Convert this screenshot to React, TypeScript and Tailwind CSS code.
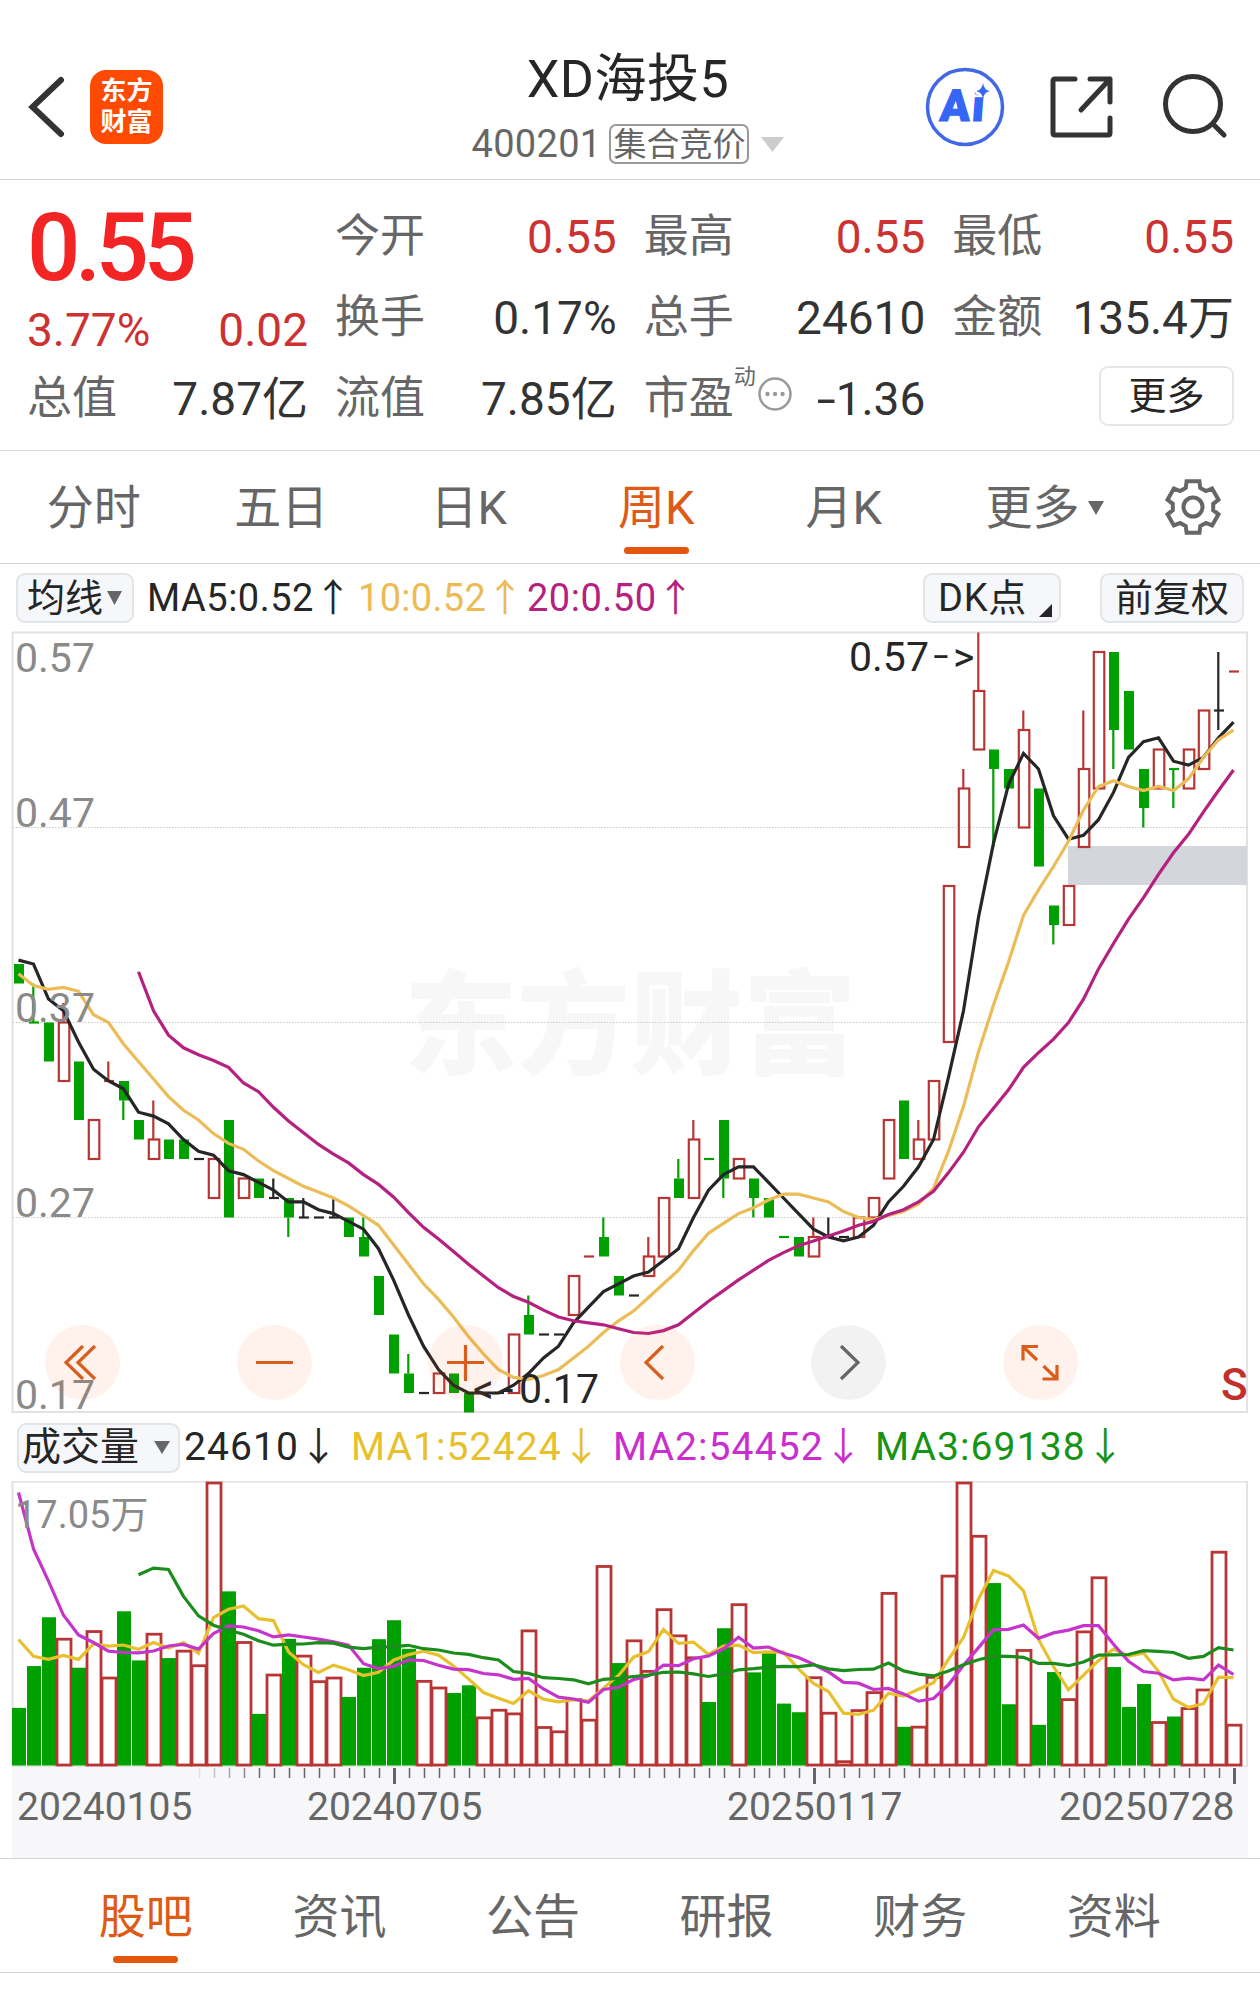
import clsx from "clsx";

// [open, close, high, low] in cents
const candles = [
  [40, 39, 40, 39], [37, 37, 39, 37], [37, 35, 37, 35], [34, 37, 38, 34], [35, 32, 35, 32],
  [30, 32, 32, 30], [34, 34, 35, 34], [34, 33, 34, 32], [32, 31, 32, 31], [30, 31, 33, 30],
  [31, 30, 31, 30], [31, 30, 31, 30], [30, 30, 30, 30], [28, 30, 30, 28], [32, 27, 32, 27],
  [28, 29, 29, 28], [29, 28, 29, 28], [28, 28, 29, 28], [28, 27, 28, 26], [27, 27, 28, 27],
  [27, 27, 27, 27], [27, 27, 28, 27], [27, 26, 27, 26], [26, 25, 27, 25], [24, 22, 24, 22],
  [21, 19, 21, 19], [19, 18, 20, 18], [18, 18, 18, 18], [18, 19, 19, 18], [19, 18, 19, 18],
  [18, 17, 18, 17], [18, 18, 18, 18], [18, 18, 18, 18], [18, 21, 21, 18], [22, 21, 23, 21],
  [21, 21, 21, 21], [21, 21, 21, 21], [22, 24, 24, 22], [25, 25, 25, 25], [26, 25, 27, 25],
  [24, 23, 24, 23], [23, 23, 23, 23], [24, 25, 26, 24], [25, 28, 28, 25], [29, 28, 30, 28],
  [28, 31, 32, 28], [30, 30, 30, 30], [32, 29, 32, 28], [29, 30, 30, 29], [29, 28, 29, 27],
  [28, 27, 28, 27], [26, 26, 26, 26], [26, 25, 26, 25], [25, 26, 27, 25], [26, 26, 27, 26],
  [26, 26, 26, 26], [26, 27, 27, 26], [27, 28, 28, 27], [29, 32, 32, 29], [33, 30, 33, 30],
  [30, 31, 32, 30], [31, 34, 34, 31], [36, 44, 44, 36], [46, 49, 50, 46], [51, 54, 57, 51],
  [51, 50, 51, 46], [50, 49, 50, 49], [47, 52, 53, 47], [49, 45, 49, 45], [43, 42, 43, 41],
  [42, 44, 44, 42], [46, 50, 53, 46], [49, 56, 56, 49], [56, 52, 56, 50], [54, 51, 54, 51],
  [50, 48, 50, 47], [49, 51, 51, 49], [50, 50, 50, 48], [49, 51, 51, 49], [50, 53, 53, 50],
  [53, 53, 56, 52], [55, 55, 55, 55],
];

// thousands of hands
const volumes = [
  34.4, 59.6, 89, 76.4, 58.6, 81, 53, 92.6, 63, 79.4, 64.4, 69.2, 60.4, 170.5, 104.6, 74.4, 30.8,
  54.8, 76, 66.2, 50.8, 53, 41, 58.6, 75.8, 87.2, 70, 51, 47, 43.4, 48, 29, 33.6, 31.4, 81.4, 23.2,
  20.6, 40, 27.6, 120.2, 61.4, 75.4, 57, 94.2, 78.4, 65.2, 38, 82.4, 97.2, 55.8, 67.6, 37, 31.8,
  53.2, 31.8, 2.6, 33.4, 44.2, 104, 23, 23.4, 53.4, 114.4, 170.5, 138.4, 109.6, 36.6, 69.6, 24.2,
  56, 40, 80.8, 113.4, 59, 35, 48.8, 26.2, 29.2, 34.6, 45.8, 128.8, 24.6,
];

const RED = "#b73635";
const GREEN = "#00a000";
const BLACK = "#262626";

const closes = candles.map((c) => c[1]);
const priceY = (p: number) => (57 - p) * 19.5 + 0.5;
const volumeY = (v: number) => 284 - (v / 170.5) * 283;

// lead holds the averages that need bars from before the visible window
const average = (values: number[], n: number, lead: number[]) => {
  const start = n - 1 - lead.length;
  const rest = values
    .slice(n - 1)
    .map((_, i) => values.slice(i, i + n).reduce((a, b) => a + b, 0) / n);
  return { start, values: [...lead, ...rest] };
};

const toPoints = (ma: { start: number; values: number[] }, y: (v: number) => number) =>
  ma.values.map((v, i) => `${18.5 + 15 * (i + ma.start)},${y(v).toFixed(1)}`).join(" ");

const priceLines = [
  { color: "#262626", ma: average(closes, 5, [40.2, 40, 38.2, 37.6]) },
  { color: "#ebbc57", ma: average(closes, 10, [39.5, 38.9, 38.7, 38.8, 38.6, 37.4, 37, 35.9, 35]) },
  {
    color: "#b5217f",
    ma: average(closes, 20, [39.6, 37.6, 36.35, 35.7, 35.35, 35.05, 34.7, 33.9, 33.45, 32.65, 31.95]),
  },
];

const volumeLines = [
  { color: "#e8c02e", ma: average(volumes, 5, [75.6, 65.4, 63.6, 66]) },
  {
    color: "#c535cb",
    ma: average(volumes, 10, [164.2, 130.2, 110.8, 90.2, 78.4, 73.8, 68.6, 67.8, 67.6]),
  },
  {
    color: "#1c8c1c",
    ma: average(volumes, 20, [114.6, 118.6, 117.8, 101.6, 89.8, 84.2, 81.2, 78.8, 74.8, 72.2, 72.8]),
  },
];

const quotes = [
  { label: "今开", value: "0.55", red: true },
  { label: "最高", value: "0.55", red: true },
  { label: "最低", value: "0.55", red: true },
  { label: "换手", value: "0.17%" },
  { label: "总手", value: "24610" },
  { label: "金额", value: "135.4万" },
];

const periods = ["分时", "五日", "日K", "周K", "月K"];
const sections = ["股吧", "资讯", "公告", "研报", "财务", "资料"];

const gearPoints = Array.from({ length: 6 }, (_, k) =>
  [
    [-21, 20.5],
    [-14, 26.5],
    [14, 26.5],
    [21, 20.5],
  ].map(([d, r]) => {
    const a = ((k * 60 - 90 + d) * Math.PI) / 180;
    return `${(30 + r * Math.cos(a)).toFixed(1)},${(30 + r * Math.sin(a)).toFixed(1)}`;
  })
)
  .flat()
  .join(" ");

const Header = () => (
  <header className="flex h-[180px] items-start border-b border-[#d4d4d4]">
    <svg className="ml-6 mt-[72px] h-[70px] w-[44px]" fill="none" stroke="#333" strokeWidth="6">
      <path d="M37 8 8.500 35 37 62" strokeLinecap="round" />
    </svg>
    <div className="ml-[22px] mt-[70px] flex h-[74px] w-[73px] flex-col items-center justify-center rounded-[16px] bg-[#fe4a02] text-[26px] leading-[31px] font-bold text-white">
      <span>东方</span>
      <span>财富</span>
    </div>
    <div className="ml-[299px] mt-[50px] flex w-[332px] flex-col items-center whitespace-nowrap">
      <h1 className="text-[52px] leading-[60px] tracking-[0.5px] text-[#262626]">XD海投5</h1>
      <div className="mt-[12px] flex items-center text-[38px] leading-[44px] text-[#666]">
        <span className="tracking-[0.3px]">400201</span>
        <span className="ml-2 flex h-[40px] items-center rounded-[7px] border-2 border-[#999] px-[2px] text-[33px] leading-none">
          集合竞价
        </span>
        <svg className="ml-3 h-[15px] w-[23px]" fill="#ccc">
          <path d="M0 0h23L11.500 15z" />
        </svg>
      </div>
    </div>
    <svg className="ml-[131px] mt-[67px] h-[80px] w-[80px]">
      <circle cx="40" cy="40" r="37.500" fill="none" stroke="#4169e6" strokeWidth="3.500" />
      <text x="14" y="54" fontSize="44" fontWeight="900" fill="#3566f5" stroke="#3566f5" strokeWidth="1.200" transform="skewX(-4) translate(4 0)">
        A<tspan dx="2">i</tspan>
      </text>
      <circle cx="57" cy="22" r="7.800" fill="#fff" />
      <path d="M58 16q1 7 7 8q-6 1-7 8q-1-7-7-8q6-1 7-8z" fill="#3566f5" />
    </svg>
    <svg className="ml-[44px] mt-[72px] h-[70px] w-[70px]" fill="none" stroke="#333" strokeWidth="5" strokeLinecap="round" strokeLinejoin="round">
      <path d="M26 7H6q-2 0-2 2v52q0 2 2 2h53q2 0 2-2V46M41 7h20v23M61 7 32 38" />
    </svg>
    <svg className="ml-[42px] mt-[70px] h-[72px] w-[70px]" fill="none" stroke="#333" strokeWidth="5" strokeLinecap="round">
      <circle cx="32" cy="34" r="27.500" />
      <path d="m52 54 11 11" />
    </svg>
  </header>
);

const QuoteItem = ({ label, value, red }: { label: string; value: string; red?: boolean }) => (
  <div className="flex h-[81px] items-center justify-between">
    <span className="text-[45px] text-[#666]">{label}</span>
    <span className={clsx("text-[46px]", red ? "text-[#cc3232]" : "text-[#333]")}>{value}</span>
  </div>
);

const Quotes = () => (
  <section className="flex h-[271px] gap-[27px] border-b border-[#d4d4d4] pl-[27px] pr-[26px] pt-[16px] leading-none">
    <div className="w-[281px]">
      <div className="h-[101px] pt-[5px] text-[94px] font-medium tracking-[-5.5px] text-[#f22424]">0.55</div>
      <div className="mt-[4px] flex h-[57px] items-center justify-between text-[46px] text-[#cc3232]">
        <span>3.77%</span>
        <span>0.02</span>
      </div>
      <QuoteItem label="总值" value="7.87亿" />
    </div>
    <div className="grid flex-1 grid-cols-3 content-start gap-x-[27px]">
      {quotes.map((q) => (
        <QuoteItem key={q.label} {...q} />
      ))}
      <QuoteItem label="流值" value="7.85亿" />
      <div className="flex h-[81px] items-center text-[46px]">
        <span className="text-[45px] text-[#666]">市盈</span>
        <span className="mb-11 text-[22px] text-[#666]">动</span>
        <svg className="mb-[10px] ml-[2px] h-[34px] w-[34px]" fill="#999">
          <circle cx="17" cy="17" r="15.500" fill="none" stroke="#999" strokeWidth="2.500" />
          <circle cx="9.500" cy="17" r="2.200" />
          <circle cx="17" cy="17" r="2.200" />
          <circle cx="24.500" cy="17" r="2.200" />
        </svg>
        <span className="ml-auto text-[#333]">
          <span className="mr-[3px] inline-block scale-x-150">-</span>1.36
        </span>
      </div>
      <div className="flex h-[81px] items-center justify-end">
        <button className="mb-[5px] h-[60px] w-[135px] rounded-[9px] border-2 border-[#e6e6e6] text-[38px] text-[#262626]">
          更多
        </button>
      </div>
    </div>
  </section>
);

const PeriodTabs = () => (
  <nav className="flex h-[113px] border-b border-[#d4d4d4] text-[47px] leading-none text-[#666]">
    {periods.map((p) => (
      <div
        key={p}
        className={clsx("flex w-[187.5px] flex-col items-center pt-[33px]", p === "周K" && "text-[#dd5b17]")}
      >
        {p}
        {p === "周K" && <span className="mt-[16px] h-[7px] w-[65px] rounded-full bg-[#e4560c]" />}
      </div>
    ))}
    <div className="ml-[48px] flex pt-[33px]">
      更多
      <svg className="ml-[8px] mt-[17px] h-[14px] w-[16px]" fill="#666">
        <path d="M0 0h16L8 14z" />
      </svg>
    </div>
    <svg className="ml-[59px] mt-[26px] h-[60px] w-[60px]" fill="none" stroke="#666" strokeWidth="4">
      <polygon points={gearPoints} />
      <circle cx="30" cy="30" r="9.500" />
    </svg>
  </nav>
);

const chip = "flex h-[50px] items-center rounded-[9px] border-2 border-[#e2e4e8] bg-[#f6f7fa] text-[#262626]";

const IndicatorBar = () => (
  <div className="flex h-[68px] items-center pl-[16px] pr-[16px] text-[38px] leading-none">
    <div className={clsx(chip, "w-[118px] pl-[9px]")}>
      均线
      <svg className="ml-[4px] h-[14px] w-[15px]" fill="#666">
        <path d="M0 0h15L7.500 14z" />
      </svg>
    </div>
    <span className="ml-[13px] w-[211px] whitespace-nowrap tracking-[0.5px] text-[#262626]">MA5:0.52↑</span>
    <span className="w-[169px] whitespace-nowrap tracking-[0.3px] text-[#ecbb55]">10:0.52↑</span>
    <span className="whitespace-nowrap tracking-[0.5px] text-[#b5217f]">20:0.50↑</span>
    <div className={clsx(chip, "ml-auto w-[138px] pl-[13px]")}>
      <span className="tracking-[0.7px]">DK点</span>
      <svg className="ml-[12px] mt-[24px] h-[13px] w-[13px] shrink-0" fill="#262626">
        <path d="M13 0v13H0z" />
      </svg>
    </div>
    <div className={clsx(chip, "ml-[39px] w-[144px] justify-center")}>前复权</div>
  </div>
);

const Candle = ({ i }: { i: number }) => {
  const [open, close, high, low] = candles[i];
  const prev = i ? closes[i - 1] : open;
  const diff = close - open || close - prev;
  const color = diff > 0 ? RED : diff < 0 ? GREEN : BLACK;
  const x = 14 + 15 * i;
  const top = Math.max(open, close);
  const bottom = Math.min(open, close);
  return (
    <g stroke={color} strokeWidth="2.200">
      {high > top && <path d={`M${x + 4.3} ${priceY(high)}V${priceY(top)}`} />}
      {low < bottom && <path d={`M${x + 4.3} ${priceY(bottom)}V${priceY(low)}`} />}
      {open === close && <path d={`M${x} ${priceY(close)}h10`} />}
      {close > open && (
        <rect x={x - 0.2} y={priceY(top)} width="10.500" height={priceY(bottom) - priceY(top)} fill="none" />
      )}
      {close < open && (
        <rect x={x} y={priceY(top)} width="10" height={priceY(bottom) - priceY(top)} fill={color} stroke="none" />
      )}
    </g>
  );
};

const PriceChart = () => (
  <div className="relative h-[782px]">
    <svg className="block h-[782px] w-[1260px] overflow-visible">
      <text x="404" y="433" fontSize="113" fontWeight="900" fill="#f7f7f7">
        东方财富
      </text>
      <rect x="12.500" y="0.500" width="1234.500" height="779.500" fill="none" stroke="#e2e2e2" strokeWidth="2" />
      <path d="M13 195.500H1247M13 390.500H1247M13 585.500H1247" stroke="#ccc" strokeDasharray="1.500 1.500" />
      <rect x="1068" y="214" width="179" height="39" fill="#d3d6db" />
      {candles.map((_, i) => (
        <Candle key={i} i={i} />
      ))}
      {priceLines.map((l) => (
        <polyline key={l.color} points={toPoints(l.ma, priceY)} fill="none" stroke={l.color} strokeWidth="3.200" />
      ))}
      <g fontSize="41" fill="#8a8a8a">
        <text x="15" y="40">0.57</text>
        <text x="15" y="195">0.47</text>
        <text x="15" y="390">0.37</text>
        <text x="15" y="585">0.27</text>
        <text x="15" y="777">0.17</text>
      </g>
      <g fontSize="41" fill="#262626">
        <text y="39">
          <tspan x="849">0.57</tspan>
          <tspan x="933" y="42" fontSize="56" fontWeight="300">-</tspan>
          <tspan x="953" y="39">&gt;</tspan>
        </text>
        <text y="771">
          <tspan x="473">&lt;</tspan>
          <tspan x="502">-</tspan>
          <tspan x="519">0.17</tspan>
        </text>
      </g>
      <text x="1221" y="768" fontSize="44" fontWeight="500" fill="#c0302c">
        S
      </text>
    </svg>
    {/* Pan and zoom controls */}
    <div className="absolute left-[45px] top-[693px] flex gap-[116.6px]">
      {[
        "M38 21 21 37.500l17 16.500M50 21 33 37.500l17 16.500",
        "M19 37.500h37",
        "M19 37.500h37M37.500 20v36",
        "M43 21 26 37.500l17 16.500",
        "M30 21l17 16.500L30 54",
        "M20 35.500V21.500h15M20.500 22 34 35M54 40v14H39.500M54 54 40.500 41",
      ].map((d, i) => (
        <svg
          key={d}
          className={clsx("h-[75px] w-[75px] rounded-full", i === 4 ? "bg-black/5" : "bg-[#ff5a14]/8")}
          fill="none"
          stroke={i === 4 ? "#666" : "#d95d1c"}
          strokeWidth="3.200"
        >
          <path d={d} />
        </svg>
      ))}
    </div>
  </div>
);

const VolumeBar = () => (
  <div className="flex h-[67px] items-center pl-[17px] text-[39px] leading-none tracking-[1.1px]">
    <div className={clsx(chip, "w-[163px] pl-[3px] tracking-normal")}>
      成交量
      <svg className="ml-[15px] h-[13px] w-[16px]" fill="#666">
        <path d="M0 0h16L8 13z" />
      </svg>
    </div>
    <span className="ml-[4px] w-[167px] whitespace-nowrap text-[#262626]">24610↓</span>
    <span className="w-[262px] whitespace-nowrap text-[#e8c02e]">MA1:52424↓</span>
    <span className="w-[262px] whitespace-nowrap text-[#c92fce]">MA2:54452↓</span>
    <span className="whitespace-nowrap text-[#179417]">MA3:69138↓</span>
  </div>
);

const VolumeChart = () => (
  <svg className="block h-[286px] w-[1260px]">
    <rect x="12.500" y="0.500" width="1234.500" height="285" fill="none" stroke="#e2e2e2" strokeWidth="2" />
    {volumes.map((v, i) => {
      const up = i > 0 && closes[i] >= closes[i - 1];
      const x = 12 + 15 * i;
      const y = volumeY(v);
      return up ? (
        <rect key={i} x={x} y={y + 1} width="14" height={283 - y} fill="#fff" stroke={RED} strokeWidth="2.800" />
      ) : (
        <rect key={i} x={x} y={y} width="14" height={284.5 - y} fill={GREEN} />
      );
    })}
    {volumeLines.map((l) => (
      <polyline key={l.color} points={toPoints(l.ma, volumeY)} fill="none" stroke={l.color} strokeWidth="3.200" />
    ))}
    <text x="15" y="47" fontSize="38" fill="#8a8a8a">
      17.05万
    </text>
  </svg>
);

const TimeAxis = () => (
  <div className="h-[92px] border-b border-[#d0d3d4] px-[12px]">
    <div className="h-full bg-[#f7f7fa]">
      <svg className="block h-[90px] w-[1236px]">
        {candles.slice(12).map((_, k) => {
          const major = [25, 53, 81].includes(k + 12);
          return (
            <path
              key={k}
              d={`M${187.5 + 15 * k} 1v${major ? 16 : 10}`}
              stroke="#666"
              strokeWidth={major ? 3 : 1.5}
              opacity={Math.min(1, 0.15 + k * 0.2)}
            />
          );
        })}
        <g fontSize="39" fill="#666">
          <text x="5" y="53">20240105</text>
          <text x="295" y="53">20240705</text>
          <text x="715" y="53">20250117</text>
          <text x="1047" y="53">20250728</text>
        </g>
      </svg>
    </div>
  </div>
);

const SectionTabs = () => (
  <nav className="flex h-[114px] border-b border-[#d0d3d4] pl-[49px] text-[47px] leading-none text-[#666]">
    {sections.map((s, i) => (
      <div key={s} className={clsx("flex w-[193.6px] flex-col items-center pt-[34px]", i === 0 && "text-[#dd5b17]")}>
        {s}
        {i === 0 && <span className="mt-[16px] h-[7px] w-[65px] rounded-full bg-[#e4560c]" />}
      </div>
    ))}
  </nav>
);

export default function App() {
  return (
    <main className="h-[1989px] w-[1260px] overflow-hidden bg-white font-[Roboto,'Noto_Sans_CJK_SC',sans-serif]">
      <Header />
      <Quotes />
      <PeriodTabs />
      <IndicatorBar />
      <PriceChart />
      <VolumeBar />
      <VolumeChart />
      <TimeAxis />
      <SectionTabs />
    </main>
  );
}
